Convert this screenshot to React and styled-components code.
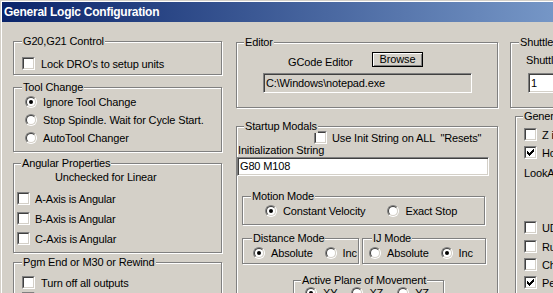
import React from "react";
import styled, { createGlobalStyle } from "styled-components";

const Global = createGlobalStyle`
  html, body { margin: 0; padding: 0; background: #d4d0c8; }
  body { width: 553px; height: 293px; overflow: hidden; font-family: "Liberation Sans", Arial, sans-serif; font-size: 11px; letter-spacing: -0.15px; color: #000; }
  * { box-sizing: border-box; }
`;

const Window = styled.div`
  width: 553px;
  height: 293px;
  overflow: hidden;
  background: #d4d0c8;
  border-top: 1px solid #d4d0c8;
  border-left: 1px solid #d4d0c8;
`;

const WindowInner = styled.div`
  height: 100%;
  border-top: 1px solid #fff;
  border-left: 1px solid #fff;
`;

const TitleBar = styled.div`
  height: 20px;
  display: flex;
  align-items: center;
  padding-left: 2px;
  background: linear-gradient(to right, #0a246a, #a6caf0) 0 0 / 800px 100% no-repeat;
`;

const Title = styled.span`
  color: #fff;
  font-family: "Liberation Sans", Arial, sans-serif;
  font-weight: bold;
  font-size: 12px;
  letter-spacing: -0.25px;
  line-height: 14px;
`;

const Body = styled.div`
  display: flex;
  align-items: flex-start;
  padding-left: 11px;
`;

const Column = styled.div`
  display: flex;
  flex-direction: column;
  align-items: flex-start;
  flex: none;
  width: ${(p) => p.$w}px;
  margin-left: ${(p) => p.$ml || 0}px;
`;

const Group = styled.div`
  position: relative;
  flex: none;
  border: 1px solid #808080;
  box-shadow: inset 1px 1px 0 #fff, 1px 1px 0 #fff;
  width: ${(p) => p.$w}px;
  height: ${(p) => p.$h}px;
  margin-top: ${(p) => p.$mt || 0}px;
  margin-left: ${(p) => p.$ml || 0}px;
  padding: ${(p) => p.$pad || "0"};
  display: flex;
  flex-direction: ${(p) => (p.$row ? "row" : "column")};
  align-items: flex-start;
`;

const Legend = styled.span`
  position: absolute;
  top: -7px;
  left: ${(p) => p.$x}px;
  padding: 0 1px;
  background: #d4d0c8;
  line-height: 13px;
  white-space: nowrap;
`;

const Text = styled.span`
  line-height: 13px;
  white-space: nowrap;
  margin-left: ${(p) => p.$ml || 0}px;
  margin-top: ${(p) => p.$mt || 0}px;
`;

const EditorLabel = styled(Text)`
  width: 84px;
`;

const Row = styled.div`
  display: flex;
  align-items: ${(p) => p.$align || "center"};
  flex: none;
  height: ${(p) => p.$h || 13}px;
  gap: ${(p) => p.$gap ?? 6}px;
  margin-top: ${(p) => p.$mt || 0}px;
  margin-left: ${(p) => p.$ml || 0}px;
  white-space: nowrap;
`;

const BoxOuter = styled.span`
  flex: none;
  display: flex;
  width: 13px;
  height: 13px;
  border: 1px solid;
  border-color: #808080 #fff #fff #808080;
`;

const BoxInner = styled.span`
  flex: 1;
  display: flex;
  align-items: center;
  justify-content: center;
  border: 1px solid;
  border-color: #404040 #d4d0c8 #d4d0c8 #404040;
  background: #fff;
`;

const RadioOuter = styled.span`
  flex: none;
  display: flex;
  width: 12px;
  height: 12px;
  border-radius: 50%;
  border: 1px solid;
  border-color: #808080 #fff #fff #808080;
`;

const RadioInner = styled.span`
  flex: 1;
  display: flex;
  align-items: center;
  justify-content: center;
  border-radius: 50%;
  border: 1px solid;
  border-color: #404040 #d4d0c8 #d4d0c8 #404040;
  background: #fff;
`;

const Dot = styled.span`
  width: 4px;
  height: 4px;
  border-radius: 50%;
  background: #000;
`;

const Field = styled.div`
  flex: none;
  display: flex;
  align-items: center;
  width: ${(p) => p.$w}px;
  height: ${(p) => p.$h}px;
  margin-top: ${(p) => p.$mt || 0}px;
  margin-left: ${(p) => p.$ml || 0}px;
  padding-left: 2px;
  border: 1px solid;
  border-color: #808080 #fff #fff #808080;
  box-shadow: inset 1px 1px 0 #404040, inset -1px -1px 0 #d4d0c8;
  background: ${(p) => (p.$ro ? "#d4d0c8" : "#fff")};
  line-height: 13px;
  white-space: nowrap;
  overflow: hidden;
`;

const Button = styled.div`
  flex: none;
  width: 51px;
  height: 15px;
  display: flex;
  align-items: center;
  justify-content: center;
  border: 1px solid #000;
  box-shadow: inset 1px 1px 0 #fff, inset -1px -1px 0 #808080;
  background: #d4d0c8;
  line-height: 13px;
`;

const Check = () => (
  <svg width="7" height="7" viewBox="0 0 7 7" shapeRendering="crispEdges">
    <path
      d="M0 2h1v3H0z M1 3h1v3H1z M2 4h1v3H2z M3 3h1v3H3z M4 2h1v3H4z M5 1h1v3H5z M6 0h1v3H6z"
      fill="#000"
    />
  </svg>
);

const CheckBox = ({ checked }) => (
  <BoxOuter>
    <BoxInner>{checked && <Check />}</BoxInner>
  </BoxOuter>
);

const Radio = ({ on }) => (
  <RadioOuter>
    <RadioInner>{on && <Dot />}</RadioInner>
  </RadioOuter>
);

const CheckItem = ({ checked, children, gap = 6, mt, ml }) => (
  <Row $gap={gap} $mt={mt} $ml={ml}>
    <CheckBox checked={checked} />
    <span>{children}</span>
  </Row>
);

const RadioItem = ({ on, children, h = 12, mt, ml }) => (
  <Row $h={h} $mt={mt} $ml={ml}>
    <Radio on={on} />
    <span>{children}</span>
  </Row>
);

export default function App() {
  return (
    <>
      <Global />
      <Window>
        <WindowInner>
          <TitleBar>
            <Title>General Logic Configuration</Title>
          </TitleBar>
          <Body>
            <Column $w={209}>
              <Group $w={209} $h={34} $mt={19} $pad="15px 0 0 8px">
                <Legend $x={8}>G20,G21 Control</Legend>
                <CheckItem>Lock DRO's to setup units</CheckItem>
              </Group>
              <Group $w={209} $h={65} $mt={12} $pad="5px 0 0 11px">
                <Legend $x={8}>Tool Change</Legend>
                <RadioItem on h={18}>Ignore Tool Change</RadioItem>
                <RadioItem h={18}>Stop Spindle. Wait for Cycle Start.</RadioItem>
                <RadioItem h={18}>AutoTool Changer</RadioItem>
              </Group>
              <Group $w={209} $h={90} $mt={11} $pad="7px 0 0 3px">
                <Legend $x={7}>Angular Properties</Legend>
                <Text $ml={38}>Unchecked for Linear</Text>
                <CheckItem gap={5} mt={8}>A-Axis is Angular</CheckItem>
                <CheckItem gap={5} mt={7}>B-Axis is Angular</CheckItem>
                <CheckItem gap={5} mt={7}>C-Axis is Angular</CheckItem>
              </Group>
              <Group $w={209} $h={60} $mt={9} $pad="13px 0 0 8px">
                <Legend $x={8}>Pgm End or M30 or Rewind</Legend>
                <CheckItem>Turn off all outputs</CheckItem>
                <CheckItem mt={3}>Reset to startup modals</CheckItem>
              </Group>
            </Column>

            <Column $w={262} $ml={14}>
              <Group $w={262} $h={66} $mt={20} $pad="9px 0 0 0">
                <Legend $x={7}>Editor</Legend>
                <Row $h={15} $ml={51} $gap={0} $align="flex-start">
                  <EditorLabel $mt={4}>GCode Editor</EditorLabel>
                  <Button>Browse</Button>
                </Row>
                <Field $ro $w={209} $h={20} $mt={6} $ml={26}>C:\Windows\notepad.exe</Field>
              </Group>
              <Group $w={262} $h={200} $mt={18} $pad="4px 0 0 0">
                <Legend $x={7}>Startup Modals</Legend>
                <CheckItem ml={77} gap={5}>Use Init String on ALL &nbsp;"Resets"</CheckItem>
                <Text $ml={1}>Initialization String</Text>
                <Field $w={252} $h={19}>G80 M108</Field>
                <Group $w={243} $h={29} $mt={20} $ml={5} $row $pad="8px 0 0 22px">
                  <Legend $x={8}>Motion Mode</Legend>
                  <RadioItem on>Constant Velocity</RadioItem>
                  <RadioItem ml={22}>Exact Stop</RadioItem>
                </Group>
                <Row $h={26} $mt={13} $ml={5} $gap={3} $align="flex-start">
                  <Group $w={117} $h={26} $row $pad="8px 0 0 10px">
                    <Legend $x={9}>Distance Mode</Legend>
                    <RadioItem on>Absolute</RadioItem>
                    <RadioItem ml={12}>Inc</RadioItem>
                  </Group>
                  <Group $w={124} $h={26} $row $pad="8px 0 0 6px">
                    <Legend $x={9}>IJ Mode</Legend>
                    <RadioItem>Absolute</RadioItem>
                    <RadioItem on ml={12}>Inc</RadioItem>
                  </Group>
                </Row>
                <Group $w={151} $h={40} $mt={16} $ml={56} $row $pad="6px 0 0 11px">
                  <Legend $x={7}>Active Plane of Movement</Legend>
                  <RadioItem on>XY</RadioItem>
                  <RadioItem ml={14}>XZ</RadioItem>
                  <RadioItem ml={14}>YZ</RadioItem>
                </Group>
              </Group>
            </Column>

            <Column $w={90} $ml={12}>
              <Group $w={90} $h={66} $mt={20} $pad="11px 0 0 15px">
                <Legend $x={8}>Shuttle Accel</Legend>
                <Text>Shuttle Accel</Text>
                <Field $w={60} $h={20} $mt={6} $ml={2}>1</Field>
              </Group>
              <Group $w={90} $h={200} $mt={8} $ml={5} $pad="11px 0 0 8px">
                <Legend $x={7}>General Configuration</Legend>
                <CheckItem gap={5}>Z is 2.5D on Output #6</CheckItem>
                <CheckItem gap={5} checked mt={5}>Home Sw. Safety</CheckItem>
                <Text $ml={0} $mt={8}>LookAhead</Text>
                <CheckItem gap={5} mt={41}>UDP Trajectory</CheckItem>
                <CheckItem gap={5} mt={6}>Run Macropump</CheckItem>
                <CheckItem gap={5} mt={5}>Charge Pump On in EStop</CheckItem>
                <CheckItem gap={5} checked mt={5}>Persistent Offsets</CheckItem>
              </Group>
            </Column>
          </Body>
        </WindowInner>
      </Window>
    </>
  );
}
